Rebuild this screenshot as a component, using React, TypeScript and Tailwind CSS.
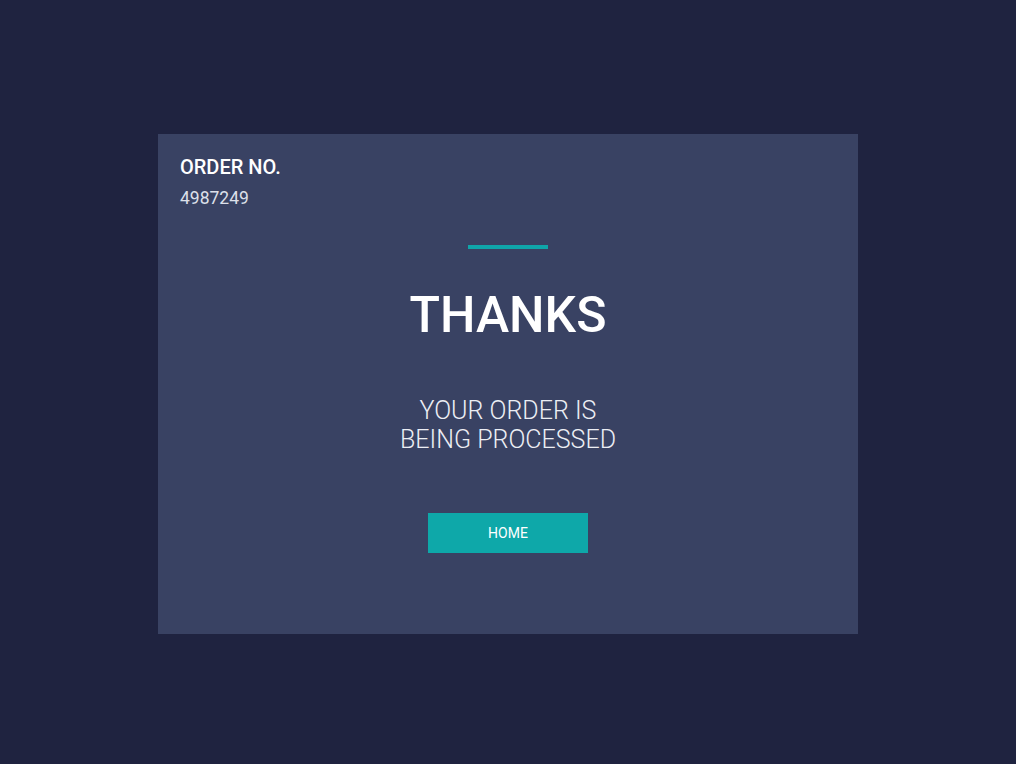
export default function App() {
  return (
    <div
      className="w-[1016px] h-[764px] bg-[#1f2340] flex justify-center pt-[134px]"
      style={{ fontFamily: "Roboto, 'Liberation Sans', sans-serif" }}
    >
      <div className="w-[700px] h-[500px] bg-[#394263] px-[22px] pt-[21px] flex flex-col">
        <div className="text-[20px] leading-[24px] font-medium text-white">ORDER NO.</div>
        <div className="text-[17.5px] leading-[24px] mt-[7px] text-[#dde0ea]">4987249</div>
        <div className="flex flex-col items-center">
          <div className="w-[80px] h-[4px] bg-[#0fa5a9] mt-[35px]" />
          <div className="text-[50px] leading-[60px] font-medium text-white mt-[36px]">THANKS</div>
          <div className="text-[25px] leading-[29px] font-light text-[#eceef4] text-center mt-[51px]">
            YOUR ORDER IS
            <br />
            BEING PROCESSED
          </div>
          <button className="w-[160px] h-[40px] bg-[#0ea8a9] text-white text-[14px] mt-[59px]">HOME</button>
        </div>
      </div>
    </div>
  );
}
